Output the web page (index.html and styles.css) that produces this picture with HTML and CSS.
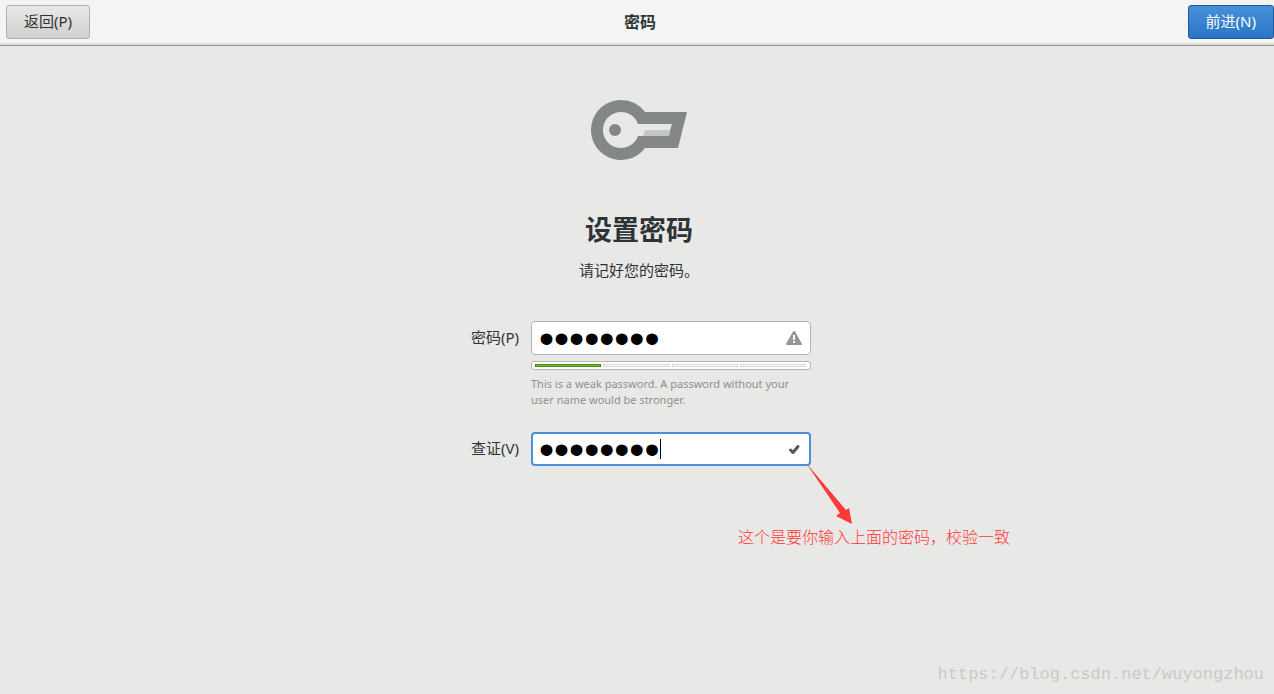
FILE: index.html
```html
<!DOCTYPE html>
<html lang="zh-CN">
<head>
<meta charset="utf-8">
<title>密码</title>
<link rel="stylesheet" href="styles.css">
</head>
<body>
<header class="headerbar">
  <button class="button" type="button">返回(P)</button>
  <div class="headerbar-title">密码</div>
  <button class="button button-suggested" type="submit" form="password-form">前进(N)</button>
</header>
<main class="page">
  <svg class="key-icon" viewBox="0 0 96 60" aria-hidden="true">
    <path fill="#848788" fill-rule="evenodd" d="M30 0A30 30 0 0 1 54 12H96L87 48H54A30 30 0 1 1 30 0ZM30 12A18 18 0 1 0 47 36H77L81 24H47A18 18 0 0 0 30 12Z"/>
    <circle cx="24" cy="30" r="6" fill="#848788"/>
    <path fill="#c4c5c4" d="M54 30H79.500L78 36H52Z"/>
  </svg>
  <h1 class="heading">设置密码</h1>
  <p class="subtitle">请记好您的密码。</p>
  <form class="form" id="password-form">
    <label class="label" for="password">密码(P)</label>
    <div class="entry">
      <input class="input" id="password" type="password" value="password" autocomplete="off">
      <svg class="entry-icon" viewBox="0 0 16 16" aria-hidden="true">
        <path fill="#969795" fill-rule="evenodd" d="M7 1.500Q8 .3 9 1.500L15.800 13.500Q16.200 15 15 15H1Q-.2 15 .2 13.500ZM7 5V10H9V5ZM7 11V13H9V11Z"/>
      </svg>
    </div>
    <div class="strength">
      <div class="meter" role="meter" aria-label="密码" aria-valuemin="0" aria-valuemax="4" aria-valuenow="1">
        <span class="meter-block meter-filled"></span>
        <span class="meter-block"></span>
        <span class="meter-block"></span>
        <span class="meter-block"></span>
      </div>
      <p class="hint">This is a weak password. A password without your user name would be stronger.</p>
    </div>
    <label class="label" for="verify">查证(V)</label>
    <div class="entry">
      <input class="input input-active" id="verify" type="password" value="password" autocomplete="off">
      <span class="caret"></span>
      <svg class="entry-icon" viewBox="0 0 16 16" aria-hidden="true">
        <path fill="none" stroke="#555a59" stroke-width="3" stroke-linecap="round" stroke-linejoin="round" d="M4.500 9L7 11.500L12 5.500"/>
      </svg>
      <div class="note">
        <svg class="note-arrow" viewBox="0 0 48 64" aria-hidden="true">
          <path fill="#ff3838" d="M1 1L41 48L44 46L47 62L31 54L35 51Z"/>
        </svg>
        <p class="note-text">这个是要你输入上面的密码，校验一致</p>
      </div>
    </div>
  </form>
</main>
<footer class="watermark">https://blog.csdn.net/wuyongzhou</footer>
</body>
</html>
```
FILE: styles.css
```css
* {
  box-sizing: border-box;
}

body {
  margin: 0;
  min-height: 100vh;
  display: flex;
  flex-direction: column;
  background: #e8e8e7;
  color: #2e3436;
  font: 15px/20px "Noto Sans", "Noto Sans CJK SC", sans-serif;
}

h1,
p {
  margin: 0;
}

.headerbar {
  display: grid;
  grid-template-columns: 1fr auto 1fr;
  align-items: center;
  padding: 5px 0 6px 6px;
  background: #f4f4f4;
  border-bottom: 1px solid #929292;
  box-shadow: inset 0 -2px #dededd;
}

.headerbar-title {
  font-size: 16px;
  font-weight: 700;
}

.button {
  justify-self: start;
  height: 34px;
  padding: 0 17px 2px;
  border: 1px solid #b0b0ae;
  border-radius: 3px;
  background: linear-gradient(#e9e9e8, #d0d0ce);
  color: #2e3436;
  font: inherit;
}

.button-suggested {
  justify-self: end;
  border-color: #205794;
  background: linear-gradient(#4790d9, #2a76c6);
  color: #fff;
}

.page {
  flex: 1;
  display: flex;
  flex-direction: column;
  align-items: center;
  padding: 54px 0 0 4px;
}

.key-icon {
  width: 96px;
  height: 60px;
}

.heading {
  margin-top: 50px;
  font-size: 27px;
  line-height: 40px;
}

.subtitle {
  margin-top: 10px;
}

.form {
  display: grid;
  grid-template-columns: 52px 280px;
  column-gap: 12px;
  margin-top: 41px;
}

.label {
  align-self: center;
  padding-bottom: 2px;
  text-align: right;
  white-space: nowrap;
}

.entry {
  position: relative;
}

.input {
  display: block;
  width: 100%;
  height: 34px;
  padding: 0 36px 0 7px;
  border: 1px solid #b4b4b2;
  border-radius: 4px;
  outline: 0;
  background: #fff;
  color: #000;
  font: 43px/30px "Liberation Sans", sans-serif;
}

.input-active {
  padding-left: 6px;
  border: 2px solid #4a90d9;
}

.caret {
  position: absolute;
  top: 7px;
  left: 129px;
  width: 1px;
  height: 20px;
  background: #000;
}

.entry-icon {
  position: absolute;
  top: 9px;
  right: 9px;
  width: 16px;
  height: 16px;
}

.strength {
  grid-column: 2;
  margin: 6px 0 24px;
}

.meter {
  display: flex;
  gap: 2px;
  height: 9px;
  padding: 2px 4px 2px 3px;
  border: 1px solid #b4b4b2;
  border-radius: 3px;
  background: #fff;
}

.meter-block {
  flex: 1;
  border: 1px solid #d6d6d5;
}

.meter-filled {
  border-color: #4a8216;
  background: #73c52c;
}

.hint {
  margin-top: 6px;
  color: #8d9090;
  font-size: 11px;
  line-height: 16px;
}

.note {
  position: absolute;
  top: 30px;
  left: 207px;
  color: #ff3838;
  font: 16px/20px "Noto Sans CJK SC", sans-serif;
  font-weight: 300;
  white-space: nowrap;
}

.note-arrow {
  display: block;
  width: 48px;
  height: 64px;
  margin-left: 67px;
}

.watermark {
  align-self: flex-end;
  padding: 0 10px 9px;
  color: #c9cac5;
  font: 17px/20px "Liberation Mono", monospace;
}
```
